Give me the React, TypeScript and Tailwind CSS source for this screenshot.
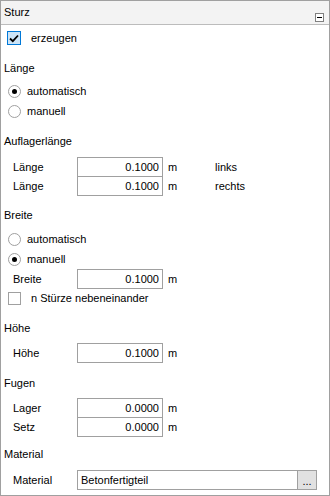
import React from 'react';

const font = { fontFamily: '"Segoe UI", "Liberation Sans", Arial, sans-serif' };

const SectionTitle: React.FC<{ text: string; className?: string }> = ({ text, className }) => (
  <div className={`h-[20px] flex items-center pl-[3px] ${className ?? ''}`}>{text}</div>
);

const Radio: React.FC<{ label: string; checked?: boolean }> = ({ label, checked }) => (
  <div className="h-[20px] flex items-center pl-[7px]">
    <span className="w-[13px] h-[13px] rounded-full border border-[#a0a0a0] bg-white flex items-center justify-center">
      {checked && <span className="w-[5px] h-[5px] rounded-full bg-black" />}
    </span>
    <span className="ml-[6px]">{label}</span>
  </div>
);

const Field: React.FC<{ label: string; value: string; unit?: string; note?: string; overlap?: boolean }> = ({
  label,
  value,
  unit = 'm',
  note,
  overlap,
}) => (
  <div className={`h-[20px] flex items-center ${overlap ? '-mt-px' : ''}`}>
    <span className="w-[76px] pl-[12px]">{label}</span>
    <div className="w-[86px] h-[20px] border border-[#a0a0a0] bg-white flex items-center justify-end pr-[3px]">
      {value}
    </div>
    <span className="ml-[5px] w-[47px]">{unit}</span>
    {note && <span>{note}</span>}
  </div>
);

export default function App() {
  return (
    <div
      className="w-[330px] h-[496px] border border-[#a0a0a0] bg-white text-[11px] text-black flex flex-col overflow-hidden"
      style={font}
    >
      <div className="h-[24px] shrink-0 bg-[#f3f3f3] border-b border-[#bcbcbc] flex items-center justify-between pl-[3px] pr-[5px]">
        <span className="-mt-[1px]">Sturz</span>
        <span className="mt-[9px] w-[9px] h-[9px] border border-[#808080] flex items-center justify-center bg-white">
          <span className="w-[5px] h-px bg-black" />
        </span>
      </div>

      <div className="mt-[3px] h-[20px] flex items-center pl-[6px]">
        <span className="w-[14px] h-[14px] border border-[#0078d7] bg-[#cce4f7] flex items-center justify-center">
          <svg width="10" height="9" viewBox="0 0 10 9">
            <path d="M1 4.5 L3.8 7.2 L9 1.5" fill="none" stroke="#000" strokeWidth="1.8" />
          </svg>
        </span>
        <span className="ml-[10px]">erzeugen</span>
      </div>

      <SectionTitle text="Länge" className="mt-[10px]" />
      <div className="mt-[3px]">
        <Radio label="automatisch" checked />
        <Radio label="manuell" />
      </div>

      <SectionTitle text="Auflagerlänge" className="mt-[10px]" />
      <div className="mt-[6px]">
        <Field label="Länge" value="0.1000" note="links" />
        <Field label="Länge" value="0.1000" note="rechts" overlap />
      </div>

      <SectionTitle text="Breite" className="mt-[9px]" />
      <div className="mt-[4px]">
        <Radio label="automatisch" />
        <Radio label="manuell" checked />
      </div>
      <Field label="Breite" value="0.1000" />
      <div className="h-[16px] mt-[1px] flex items-center pl-[7px]">
        <span className="w-[13px] h-[13px] border border-[#a0a0a0] bg-white" />
        <span className="ml-[10px]">n Stürze nebeneinander</span>
      </div>

      <SectionTitle text="Höhe" className="mt-[12px]" />
      <div className="mt-[5px]">
        <Field label="Höhe" value="0.1000" />
      </div>

      <SectionTitle text="Fugen" className="mt-[10px]" />
      <div className="mt-[5px]">
        <Field label="Lager" value="0.0000" />
        <Field label="Setz" value="0.0000" overlap />
      </div>

      <SectionTitle text="Material" className="mt-[7px]" />
      <div className="mt-[6px] h-[20px] flex items-center">
        <span className="w-[76px] pl-[12px]">Material</span>
        <div className="w-[240px] h-[20px] flex border border-[#a0a0a0]">
          <div className="flex-1 bg-white flex items-center pl-[3px]">Betonfertigteil</div>
          <div className="w-[19px] border-l border-[#a0a0a0] bg-[#e1e1e1] flex items-center justify-center leading-none pt-[3px]">
            ...
          </div>
        </div>
      </div>
    </div>
  );
}
